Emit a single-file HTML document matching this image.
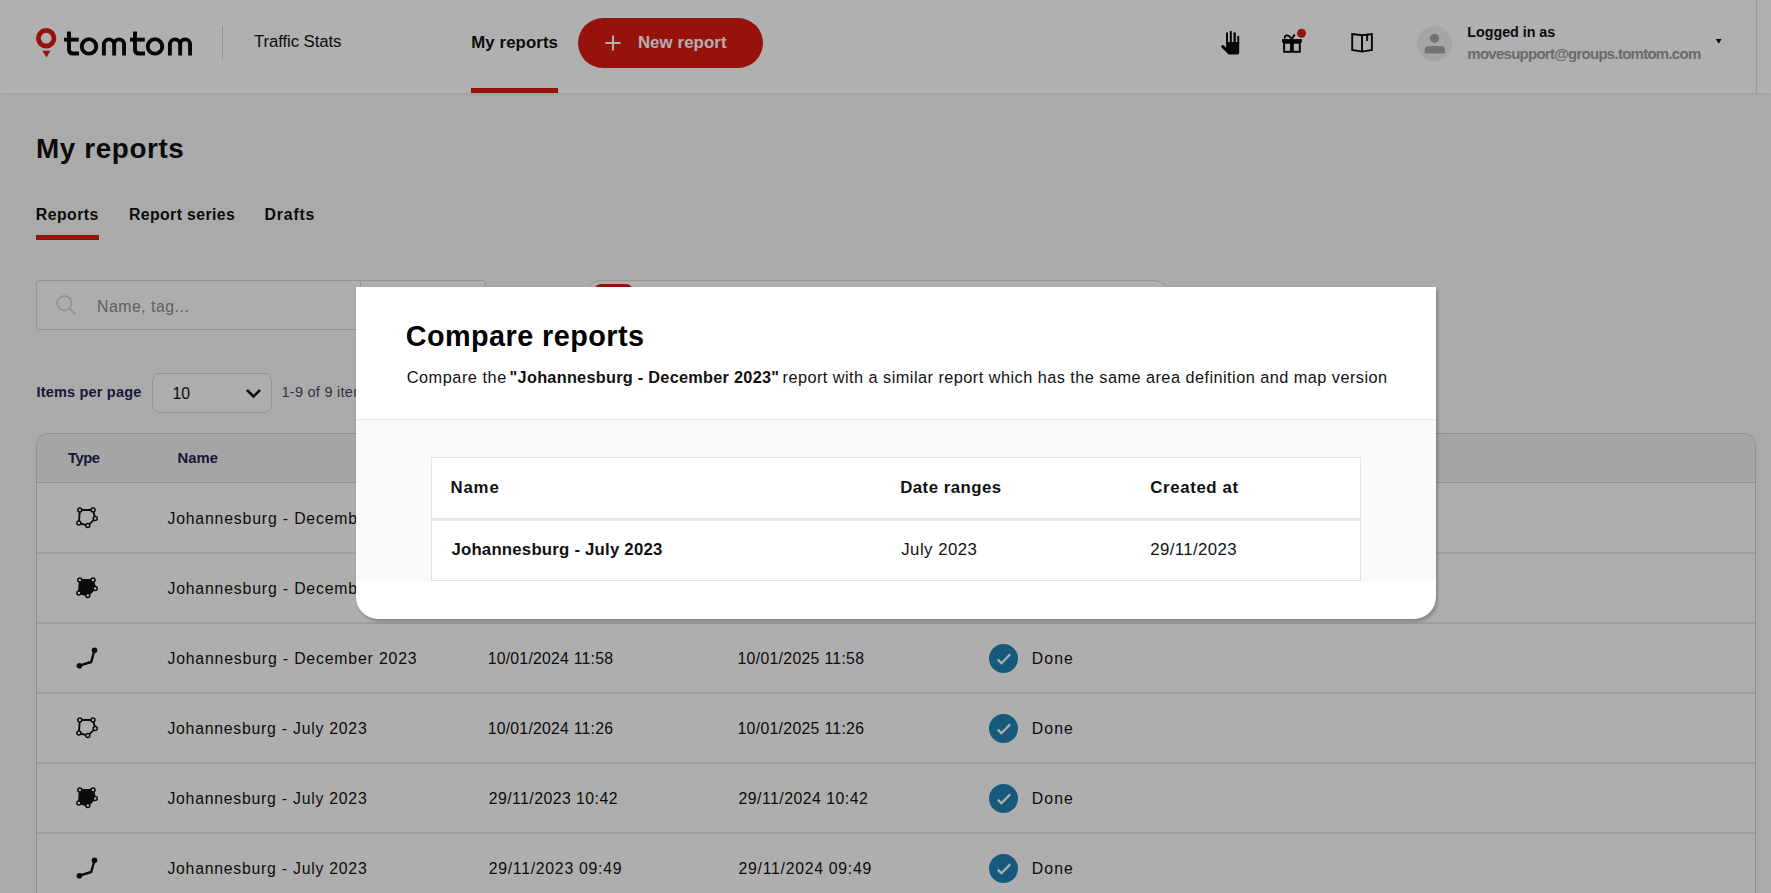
<!DOCTYPE html>
<html><head><meta charset="utf-8">
<style>
*{box-sizing:border-box;margin:0;padding:0}
html,body{width:1771px;height:893px;overflow:hidden}
body{font-family:"Liberation Sans",sans-serif;background:#f7f7f7;color:#111;position:relative}
.t{position:absolute;white-space:nowrap;line-height:1}
.abs{position:absolute}
#hdr{position:absolute;left:0;top:0;width:1771px;height:93px;background:#fff;box-shadow:0 1px 5px rgba(0,0,0,0.07)}
#overlay{position:absolute;left:0;top:0;width:1771px;height:893px;background:rgba(0,0,0,0.31)}
#modal{position:absolute;left:356px;top:287px;width:1080px;height:332px;background:#fff;border-radius:0 0 22px 22px;box-shadow:2px 3px 3px rgba(0,0,0,0.2),0 0 2px rgba(0,0,0,0.08);overflow:hidden}
svg{position:absolute;left:0;top:0;overflow:visible}
</style></head>
<body>
<div id="hdr"></div>
<!-- header fixed lines -->
<div class="abs" style="left:222px;top:26px;width:1px;height:34px;background:#d4d4d4"></div>
<div class="abs" style="left:1756px;top:0;width:1px;height:93px;background:#e0e0e0"></div>
<div class="abs" style="left:471px;top:88px;width:87px;height:5px;background:#da1b13"></div>
<div class="abs" style="left:578px;top:18px;width:185px;height:50px;border-radius:25px;background:#da1b13"></div>
<div class="abs" style="left:1417px;top:26px;width:35px;height:35px;border-radius:50%;background:#f0f0f0"></div>

<!-- main blocks -->
<div class="abs" style="left:36px;top:235px;width:63px;height:5px;background:#da1b13"></div>
<div class="abs" style="left:36px;top:280px;width:450px;height:50px;border:1px solid #d6d6d6;border-radius:3px;background:#fbfbfb"></div>
<div class="abs" style="left:360px;top:280px;width:1px;height:50px;background:#d6d6d6"></div>
<div class="abs" style="left:585px;top:280px;width:585px;height:50px;border:1px solid #d6d6d6;border-radius:17px;background:#fff"></div>
<div class="abs" style="left:593.5px;top:283.7px;width:39px;height:42px;border-radius:7px;background:#da1b13"></div>
<div class="abs" style="left:152px;top:373px;width:120px;height:40px;border:1px solid #d6d6d6;border-radius:8px;background:#fbfbfb"></div>

<!-- table -->
<div class="abs" style="left:36px;top:433px;width:1720px;height:480px;border:1px solid #cfcfcf;border-radius:12px 12px 0 0;background:#fdfdfd;overflow:hidden">
  <div class="abs" style="left:0;top:0;width:1720px;height:49px;background:#efefef;border-bottom:1px solid #d6d6d6"></div>
</div>

<svg width="1771" height="893" viewBox="0 0 1771 893">
  <!-- logo -->
  <circle cx="46.2" cy="38.2" r="7.8" fill="none" stroke="#da1b13" stroke-width="4.8"/>
  <polygon points="42.4,50.8 50.4,50.8 46.4,57.6" fill="#da1b13"/>
  <g fill="none" stroke="#0a0a0a" stroke-width="3.9">
    <path d="M69 31.5 V49.4 Q69 53.5 73.1 53.5 H79"/>
    <circle cx="89" cy="46.4" r="7.25"/>
    <path d="M103.9 55.6 V44.3 A5.13 5.13 0 0 1 114.15 44.3 V55.6 M114.15 44.3 A4.93 4.93 0 0 1 124.05 44.3 V55.6"/>
    <path d="M64 39.65 H78.8" />
  </g>
<g transform="translate(66,0)">  <g fill="none" stroke="#0a0a0a" stroke-width="3.9">
    <path d="M69 31.5 V49.4 Q69 53.5 73.1 53.5 H79"/>
    <circle cx="89" cy="46.4" r="7.25"/>
    <path d="M103.9 55.6 V44.3 A5.13 5.13 0 0 1 114.15 44.3 V55.6 M114.15 44.3 A4.93 4.93 0 0 1 124.05 44.3 V55.6"/>
    <path d="M64 39.65 H78.8" />
  </g>
</g>
  <!-- plus -->
  <path d="M613 35.5 V50.5 M605.5 43 H620.5" stroke="#fff" stroke-width="2"/>
  <!-- hand -->
  <g transform="translate(1215,25)" fill="#0a0a0a">
    <rect x="11" y="7.2" width="2" height="12" rx="1"/>
    <rect x="14.8" y="5.8" width="2" height="13" rx="1"/>
    <rect x="18.5" y="7.2" width="2.3" height="12" rx="1"/>
    <rect x="22.2" y="10.8" width="2" height="9" rx="1"/>
    <path d="M11.2 17 H24.2 V27.6 Q24.2 29.6 22.2 29.6 H13.6 L6.6 22.4 Q5.6 21 6.8 20.2 Q7.8 19.6 9 20.6 L11.2 22.6 Z"/>
  </g>
  <!-- gift -->
  <g transform="translate(1275,25)">
    <rect x="7" y="14.1" width="19.9" height="3.6" fill="#0a0a0a"/>
    <rect x="9.1" y="17.7" width="15.7" height="9.1" fill="none" stroke="#0a0a0a" stroke-width="2"/>
    <rect x="15" y="17" width="3.8" height="10" fill="#0a0a0a"/>
    <path d="M16.8 14 Q14 10 11.5 10.4 Q9 11 10 13.6 M16.8 14 L19.6 9.4" fill="none" stroke="#0a0a0a" stroke-width="1.9"/>
    <circle cx="26.5" cy="8.3" r="4.5" fill="#da1b13"/>
  </g>
  <!-- book -->
  <g transform="translate(1342,23)" fill="none" stroke="#0a0a0a" stroke-width="1.9" stroke-linejoin="miter">
    <path d="M10.2 11 L20 12.2 L29.9 11 V27 L20 28.6 L10.2 27 Z M20 12.2 V29.5 M25.2 11.6 V18"/>
  </g>
  <!-- avatar -->
  <circle cx="1434.5" cy="38.3" r="4.6" fill="#a9a7a7"/>
  <path d="M1424.8 53.6 V49.5 Q1424.8 46 1429 46 H1441 Q1445 46 1445 49.5 V53.6 Z" fill="#a9a7a7"/>
  <!-- caret -->
  <polygon points="1715.8,39 1721.6,39 1718.7,43.8" fill="#0a0a0a"/>
  <!-- search icon -->
  <circle cx="64.3" cy="303.2" r="7.2" fill="none" stroke="#cfcfcf" stroke-width="1.5"/>
  <path d="M69.5 308.5 L75 314" stroke="#cfcfcf" stroke-width="1.7"/>
  <!-- chevron -->
  <path d="M247 390 L253.5 396.5 L260 390" fill="none" stroke="#111" stroke-width="2.6"/>
  <g transform="translate(87,518)"><polygon points="-7.2,-8.0 6.0,-8.0 8.2,0.6 0.8,7.6 -8.1,5.0" fill="none" stroke="#111" stroke-width="1.9" stroke-linejoin="round"/><circle cx="-7.2" cy="-8.0" r="2" fill="#fff" stroke="#111" stroke-width="1.5"/><circle cx="6.0" cy="-8.0" r="2" fill="#fff" stroke="#111" stroke-width="1.5"/><circle cx="8.2" cy="0.6" r="2" fill="#fff" stroke="#111" stroke-width="1.5"/><circle cx="0.8" cy="7.6" r="2" fill="#fff" stroke="#111" stroke-width="1.5"/><circle cx="-8.1" cy="5.0" r="2" fill="#fff" stroke="#111" stroke-width="1.5"/></g><circle cx="1003.5" cy="518.4" r="14.5" fill="#2182b1"/><polyline points="997.8,519.6 1001.5,523.3 1010.2,514.2" fill="none" stroke="#fff" stroke-width="2.2"/><rect x="37" y="552.5" width="1718" height="1" fill="#cfcfcf"/><g transform="translate(87,588)"><polygon points="-7.2,-8.0 6.0,-8.0 8.2,0.6 0.8,7.6 -8.1,5.0" fill="#111" stroke="#111" stroke-width="1.9" stroke-linejoin="round"/><circle cx="-7.2" cy="-8.0" r="2" fill="#fff" stroke="#111" stroke-width="1.5"/><circle cx="6.0" cy="-8.0" r="2" fill="#fff" stroke="#111" stroke-width="1.5"/><circle cx="8.2" cy="0.6" r="2" fill="#fff" stroke="#111" stroke-width="1.5"/><circle cx="0.8" cy="7.6" r="2" fill="#fff" stroke="#111" stroke-width="1.5"/><circle cx="-8.1" cy="5.0" r="2" fill="#fff" stroke="#111" stroke-width="1.5"/></g><circle cx="1003.5" cy="588.4" r="14.5" fill="#2182b1"/><polyline points="997.8,589.6 1001.5,593.3 1010.2,584.2" fill="none" stroke="#fff" stroke-width="2.2"/><rect x="37" y="622.5" width="1718" height="1" fill="#cfcfcf"/><g transform="translate(0,0)"><polyline points="79.4,665.7 91.2,662 94.5,650.2" fill="none" stroke="#111" stroke-width="2.4" stroke-linejoin="round"/><circle cx="79.4" cy="665.7" r="2.8" fill="#111"/><circle cx="94.5" cy="650.2" r="2.8" fill="#111"/></g><circle cx="1003.5" cy="658.4" r="14.5" fill="#2182b1"/><polyline points="997.8,659.6 1001.5,663.3 1010.2,654.2" fill="none" stroke="#fff" stroke-width="2.2"/><rect x="37" y="692.5" width="1718" height="1" fill="#cfcfcf"/><g transform="translate(87,728)"><polygon points="-7.2,-8.0 6.0,-8.0 8.2,0.6 0.8,7.6 -8.1,5.0" fill="none" stroke="#111" stroke-width="1.9" stroke-linejoin="round"/><circle cx="-7.2" cy="-8.0" r="2" fill="#fff" stroke="#111" stroke-width="1.5"/><circle cx="6.0" cy="-8.0" r="2" fill="#fff" stroke="#111" stroke-width="1.5"/><circle cx="8.2" cy="0.6" r="2" fill="#fff" stroke="#111" stroke-width="1.5"/><circle cx="0.8" cy="7.6" r="2" fill="#fff" stroke="#111" stroke-width="1.5"/><circle cx="-8.1" cy="5.0" r="2" fill="#fff" stroke="#111" stroke-width="1.5"/></g><circle cx="1003.5" cy="728.4" r="14.5" fill="#2182b1"/><polyline points="997.8,729.6 1001.5,733.3 1010.2,724.2" fill="none" stroke="#fff" stroke-width="2.2"/><rect x="37" y="762.5" width="1718" height="1" fill="#cfcfcf"/><g transform="translate(87,798)"><polygon points="-7.2,-8.0 6.0,-8.0 8.2,0.6 0.8,7.6 -8.1,5.0" fill="#111" stroke="#111" stroke-width="1.9" stroke-linejoin="round"/><circle cx="-7.2" cy="-8.0" r="2" fill="#fff" stroke="#111" stroke-width="1.5"/><circle cx="6.0" cy="-8.0" r="2" fill="#fff" stroke="#111" stroke-width="1.5"/><circle cx="8.2" cy="0.6" r="2" fill="#fff" stroke="#111" stroke-width="1.5"/><circle cx="0.8" cy="7.6" r="2" fill="#fff" stroke="#111" stroke-width="1.5"/><circle cx="-8.1" cy="5.0" r="2" fill="#fff" stroke="#111" stroke-width="1.5"/></g><circle cx="1003.5" cy="798.4" r="14.5" fill="#2182b1"/><polyline points="997.8,799.6 1001.5,803.3 1010.2,794.2" fill="none" stroke="#fff" stroke-width="2.2"/><rect x="37" y="832.5" width="1718" height="1" fill="#cfcfcf"/><g transform="translate(0,210)"><polyline points="79.4,665.7 91.2,662 94.5,650.2" fill="none" stroke="#111" stroke-width="2.4" stroke-linejoin="round"/><circle cx="79.4" cy="665.7" r="2.8" fill="#111"/><circle cx="94.5" cy="650.2" r="2.8" fill="#111"/></g><circle cx="1003.5" cy="868.4" r="14.5" fill="#2182b1"/><polyline points="997.8,869.6 1001.5,873.3 1010.2,864.2" fill="none" stroke="#fff" stroke-width="2.2"/>
</svg>

<div class="t" style="left:254.00px;top:34.28px;font-size:16.8px;font-weight:400;color:#111111;letter-spacing:-0.100px">Traffic Stats</div>
<div class="t" style="left:471.30px;top:35.18px;font-size:16.8px;font-weight:700;color:#111111;letter-spacing:0.094px">My reports</div>
<div class="t" style="left:637.90px;top:35.18px;font-size:16.8px;font-weight:700;color:#ffffff;letter-spacing:0.115px">New report</div>
<div class="t" style="left:1467.30px;top:25.20px;font-size:14.3px;font-weight:700;color:#111111;letter-spacing:-0.020px">Logged in as</div>
<div class="t" style="left:1467.30px;top:45.80px;font-size:15.0px;font-weight:700;color:#9a9a9a;letter-spacing:-0.739px">movesupport@groups.tomtom.com</div>
<div class="t" style="left:36.10px;top:134.97px;font-size:27.8px;font-weight:700;color:#111111;letter-spacing:0.617px">My reports</div>
<div class="t" style="left:35.80px;top:206.63px;font-size:15.8px;font-weight:700;color:#111111;letter-spacing:0.483px">Reports</div>
<div class="t" style="left:129.00px;top:206.63px;font-size:15.8px;font-weight:700;color:#111111;letter-spacing:0.402px">Report series</div>
<div class="t" style="left:264.50px;top:206.63px;font-size:15.8px;font-weight:700;color:#111111;letter-spacing:0.848px">Drafts</div>
<div class="t" style="left:97.00px;top:298.93px;font-size:15.8px;font-weight:400;color:#8a8a8a;letter-spacing:0.522px">Name, tag...</div>
<div class="t" style="left:36.50px;top:385.23px;font-size:14.5px;font-weight:700;color:#1f2450;letter-spacing:0.186px">Items per page</div>
<div class="t" style="left:172.50px;top:386.03px;font-size:15.8px;font-weight:400;color:#111111;letter-spacing:0.000px">10</div>
<div class="t" style="left:281.50px;top:385.23px;font-size:14.5px;font-weight:400;color:#474b60;letter-spacing:0.262px">1-9 of 9 items</div>
<div class="t" style="left:68.00px;top:451.17px;font-size:14.8px;font-weight:700;color:#1f2450;letter-spacing:-0.469px">Type</div>
<div class="t" style="left:177.40px;top:451.17px;font-size:14.8px;font-weight:700;color:#1f2450;letter-spacing:0.109px">Name</div>
<div class="t" style="left:167.40px;top:510.93px;font-size:15.8px;font-weight:400;color:#111111;letter-spacing:0.838px">Johannesburg - December 2023</div>
<div class="t" style="left:487.70px;top:510.93px;font-size:15.8px;font-weight:400;color:#111111;letter-spacing:0.220px">10/01/2024 12:02</div>
<div class="t" style="left:737.50px;top:510.93px;font-size:15.8px;font-weight:400;color:#111111;letter-spacing:0.300px">10/01/2025 12:02</div>
<div class="t" style="left:1031.80px;top:510.73px;font-size:15.8px;font-weight:400;color:#111111;letter-spacing:1.107px">Done</div>
<div class="t" style="left:167.40px;top:580.93px;font-size:15.8px;font-weight:400;color:#111111;letter-spacing:0.838px">Johannesburg - December 2023</div>
<div class="t" style="left:487.70px;top:580.93px;font-size:15.8px;font-weight:400;color:#111111;letter-spacing:0.154px">10/01/2024 12:00</div>
<div class="t" style="left:737.50px;top:580.93px;font-size:15.8px;font-weight:400;color:#111111;letter-spacing:0.234px">10/01/2025 12:00</div>
<div class="t" style="left:1031.80px;top:580.73px;font-size:15.8px;font-weight:400;color:#111111;letter-spacing:1.107px">Done</div>
<div class="t" style="left:167.40px;top:650.93px;font-size:15.8px;font-weight:400;color:#111111;letter-spacing:0.838px">Johannesburg - December 2023</div>
<div class="t" style="left:487.70px;top:650.93px;font-size:15.8px;font-weight:400;color:#111111;letter-spacing:0.232px">10/01/2024 11:58</div>
<div class="t" style="left:737.50px;top:650.93px;font-size:15.8px;font-weight:400;color:#111111;letter-spacing:0.312px">10/01/2025 11:58</div>
<div class="t" style="left:1031.80px;top:650.73px;font-size:15.8px;font-weight:400;color:#111111;letter-spacing:1.107px">Done</div>
<div class="t" style="left:167.40px;top:720.93px;font-size:15.8px;font-weight:400;color:#111111;letter-spacing:0.761px">Johannesburg - July 2023</div>
<div class="t" style="left:487.70px;top:720.93px;font-size:15.8px;font-weight:400;color:#111111;letter-spacing:0.232px">10/01/2024 11:26</div>
<div class="t" style="left:737.50px;top:720.93px;font-size:15.8px;font-weight:400;color:#111111;letter-spacing:0.312px">10/01/2025 11:26</div>
<div class="t" style="left:1031.80px;top:720.73px;font-size:15.8px;font-weight:400;color:#111111;letter-spacing:1.107px">Done</div>
<div class="t" style="left:167.40px;top:790.93px;font-size:15.8px;font-weight:400;color:#111111;letter-spacing:0.761px">Johannesburg - July 2023</div>
<div class="t" style="left:488.70px;top:790.93px;font-size:15.8px;font-weight:400;color:#111111;letter-spacing:0.465px">29/11/2023 10:42</div>
<div class="t" style="left:738.50px;top:790.93px;font-size:15.8px;font-weight:400;color:#111111;letter-spacing:0.498px">29/11/2024 10:42</div>
<div class="t" style="left:1031.80px;top:790.73px;font-size:15.8px;font-weight:400;color:#111111;letter-spacing:1.107px">Done</div>
<div class="t" style="left:167.40px;top:860.93px;font-size:15.8px;font-weight:400;color:#111111;letter-spacing:0.761px">Johannesburg - July 2023</div>
<div class="t" style="left:488.70px;top:860.93px;font-size:15.8px;font-weight:400;color:#111111;letter-spacing:0.732px">29/11/2023 09:49</div>
<div class="t" style="left:738.50px;top:860.93px;font-size:15.8px;font-weight:400;color:#111111;letter-spacing:0.732px">29/11/2024 09:49</div>
<div class="t" style="left:1031.80px;top:860.73px;font-size:15.8px;font-weight:400;color:#111111;letter-spacing:1.107px">Done</div>

<div id="overlay"></div>
<div id="modal">
  <div class="abs" style="left:0;top:132px;width:1080px;height:1px;background:#e8e8e8"></div>
  <div class="abs" style="left:0;top:133px;width:1080px;height:161px;background:#fafafa"></div>
  <div class="abs" style="left:75px;top:170px;width:930px;height:124px;border:1px solid #e2e2e2;background:#fff">
    <div class="abs" style="left:0;top:60px;width:928px;height:2.5px;background:#e5e7e5"></div>
  </div>
</div>
<div class="t" style="left:405.70px;top:322.32px;font-size:28.8px;font-weight:700;color:#000000;letter-spacing:0.449px">Compare reports</div>
<div class="t" style="left:406.70px;top:368.80px;font-size:16.3px;font-weight:400;color:#111111;letter-spacing:0.544px">Compare the</div>
<div class="t" style="left:509.60px;top:368.80px;font-size:16.3px;font-weight:700;color:#111111;letter-spacing:0.271px">"Johannesburg - December 2023"</div>
<div class="t" style="left:782.50px;top:368.80px;font-size:16.3px;font-weight:400;color:#111111;letter-spacing:0.465px">report with a similar report which has the same area definition and map version</div>
<div class="t" style="left:450.40px;top:480.08px;font-size:16.8px;font-weight:700;color:#111111;letter-spacing:0.876px">Name</div>
<div class="t" style="left:900.20px;top:480.08px;font-size:16.8px;font-weight:700;color:#111111;letter-spacing:0.487px">Date ranges</div>
<div class="t" style="left:1150.20px;top:480.08px;font-size:16.8px;font-weight:700;color:#111111;letter-spacing:0.657px">Created at</div>
<div class="t" style="left:451.40px;top:541.88px;font-size:16.8px;font-weight:700;color:#111111;letter-spacing:0.210px">Johannesburg - July 2023</div>
<div class="t" style="left:901.20px;top:541.88px;font-size:16.8px;font-weight:400;color:#111111;letter-spacing:0.487px">July 2023</div>
<div class="t" style="left:1150.20px;top:541.88px;font-size:16.8px;font-weight:400;color:#111111;letter-spacing:0.410px">29/11/2023</div>
</body></html>
